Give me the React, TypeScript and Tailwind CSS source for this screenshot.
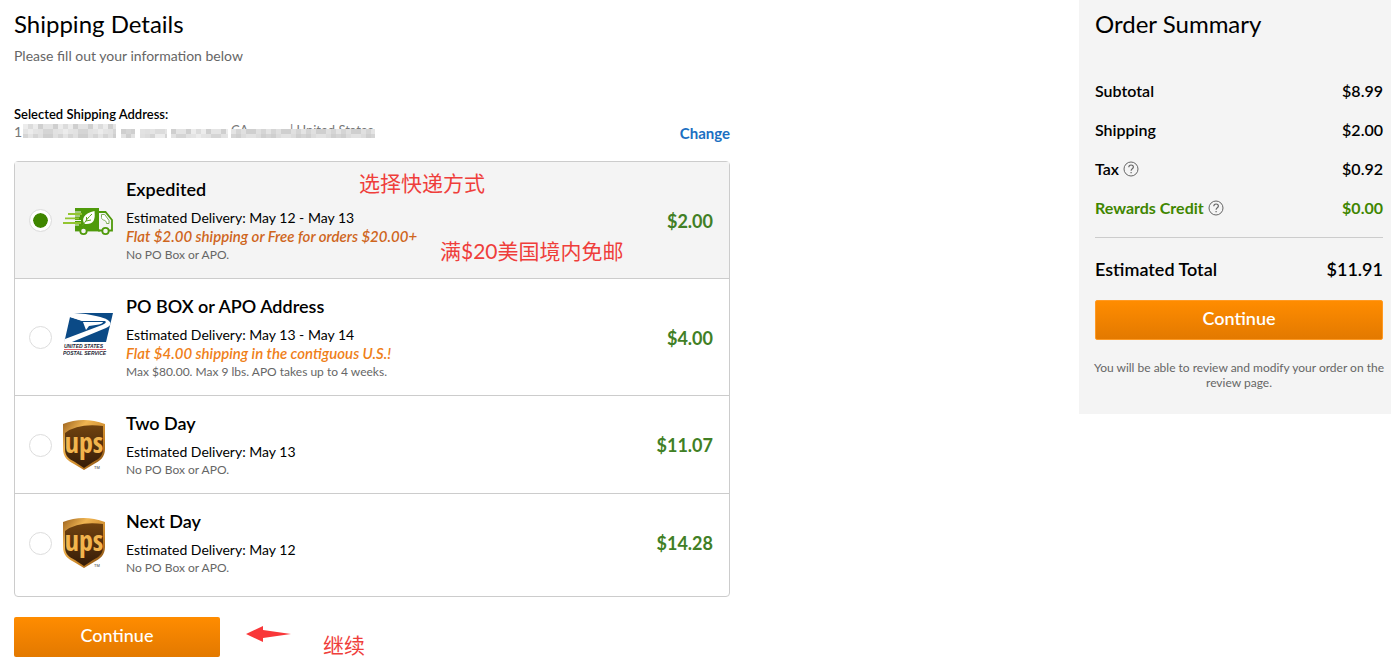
import { useState } from "react";

const methods = [
    { id: "expedited", title: "Expedited", delivery: "Estimated Delivery: May 12 - May 13", promo: "Flat $2.00 shipping or Free for orders $20.00+", note: "No PO Box or APO.", price: "$2.00", logo: "truck" },
    { id: "pobox", title: "PO BOX or APO Address", delivery: "Estimated Delivery: May 13 - May 14", promo: "Flat $4.00 shipping in the contiguous U.S.!", note: "Max $80.00. Max 9 lbs. APO takes up to 4 weeks.", price: "$4.00", logo: "usps" },
    { id: "two-day", title: "Two Day", delivery: "Estimated Delivery: May 13", promo: "", note: "No PO Box or APO.", price: "$11.07", logo: "ups" },
    { id: "next-day", title: "Next Day", delivery: "Estimated Delivery: May 12", promo: "", note: "No PO Box or APO.", price: "$14.28", logo: "ups" },
];

const summary = [
    { label: "Subtotal", value: "$8.99", help: false, green: false },
    { label: "Shipping", value: "$2.00", help: false, green: false },
    { label: "Tax", value: "$0.92", help: true, green: false },
    { label: "Rewards Credit", value: "$0.00", help: true, green: true },
];

// Blocks that hide the private part of the address: start, end
const maskRuns = [[9, 102], [107, 121], [126, 153], [157, 214], [217, 361]];
const maskShades = ["#dcdcdc", "#e4e4e4", "#cfcfcf", "#e0e0e0", "#ececec", "#d5d5d5", "#e2e2e2"];

function AddressMask() {
    const cells = maskRuns.flatMap(([from, to], run) => {
        const out = [];
        for (let x = from; x < to; x += 5) {
            for (let row = 0; row < 3; row++) {
                if (row === 0 && x > 102) continue;
                const shade = maskShades[(x * x + row * 4 + run) % 7];
                out.push(<rect key={`${x}-${row}`} x={x} y={row * 5} width={Math.min(5, to - x)} height={row === 2 ? 4 : 5} fill={shade} />);
            }
        }
        return out;
    });
    return <svg className="absolute left-0 top-0" width="362" height="14" viewBox="0 0 362 14" aria-hidden="true">{cells}</svg>;
}

function TruckLogo() {
    return (
        <svg width="50" height="30" viewBox="0 0 50 30" fill="none" aria-hidden="true">
            <path d="M12 2h24v22H12z" fill="#4f9a0b" />
            <path d="M36 6h6.500l6.500 8v10.500h-3M35 24.500h4" stroke="#4f9a0b" strokeWidth="1.800" />
            <path d="M38.500 8.500h3.200l4.300 6v3h-2.500c0-2-1-3-3-3.500-1.500-.5-2-1.500-2-2.500z" fill="#fff" stroke="#7fae58" />
            <path d="M12 6h6M12 10h5M12 14.500h6M12 19h4" stroke="#f4f4f4" strokeWidth="1.200" />
            <path d="M5 8h14M2 12.300h14M0 17h18" stroke="#93c531" strokeWidth="1.800" />
            <path d="M21.500 18C18 13 21 7 31.500 5c1 9-1 13-8 13z" fill="#fff" />
            <path d="M19.500 20c3-5 6-9 9.500-12M23.500 14.500v-3.500M23 15l5-1" stroke="#61a321" />
            <path d="M12 24.500h25" stroke="#4f9a0b" strokeWidth="1.800" />
            <circle cx="20.500" cy="25" r="3.200" fill="#f4f4f4" stroke="#4f9a0b" strokeWidth="1.800" />
            <circle cx="42.500" cy="25" r="3.200" fill="#f4f4f4" stroke="#4f9a0b" strokeWidth="1.800" />
        </svg>
    );
}

function UspsLogo() {
    return (
        <svg width="50" height="50" viewBox="0 0 50 50" aria-hidden="true">
            <path d="M8 0h42l-7 29H1z" fill="#0b4a86" />
            <path d="M4 0h7c16 1 31 4 35 8 3 3 1 5-3 7L9 29H1z" fill="#fff" />
            <path d="M7 4l12 4h23c2 1 0 3-3 4L2 26z" fill="#0b4a86" />
            <path d="M5 2c14 1 27 3 37 6H20L7 4z" fill="#fff" />
            <path d="M20 9h20c0 1-2 2-4 2.500l-10 1.500-3 4z" fill="#fff" />
            <text x="1" y="35" fontFamily="Liberation Sans" fontSize="5" fontWeight="700" fontStyle="italic" fill="#1d2433">UNITED STATES</text>
            <path d="M1 36.500h42" stroke="#dc3b46" strokeWidth="0.800" />
            <text x="0" y="42" fontFamily="Liberation Sans" fontSize="5" fontWeight="700" fontStyle="italic" fill="#1d2433">POSTAL SERVICE</text>
        </svg>
    );
}

function UpsLogo() {
    return (
        <svg width="50" height="52" viewBox="0 0 50 52" aria-hidden="true">
            <defs>
                <linearGradient id="upsGold" x1="0" y1="0" x2="1" y2="1">
                    <stop offset="0" stopColor="#9a601c" />
                    <stop offset="0.300" stopColor="#f0b552" />
                    <stop offset="0.650" stopColor="#c98527" />
                    <stop offset="1" stopColor="#75420f" />
                </linearGradient>
                <linearGradient id="upsBrown" x1="0" y1="0" x2="0" y2="1">
                    <stop offset="0" stopColor="#70420f" />
                    <stop offset="1" stopColor="#351c08" />
                </linearGradient>
            </defs>
            <path d="M0 5Q20-3 42 5v25c0 8-5 12-11 15l-10 6-10-6C5 42 0 38 0 30z" fill="url(#upsGold)" />
            <path d="M2 14Q15 4 40 7v23c0 7-4 10-10 13l-9 6-9-6C6 40 2 37 2 30z" fill="url(#upsBrown)" />
            <text x="21" y="34" textAnchor="middle" fontFamily="'Liberation Sans Narrow', 'Open Sans Condensed', 'DejaVu Sans Condensed', sans-serif" fontSize="28" fontWeight="700" fill="#f2b44d">ups</text>
            <text x="31" y="50" fontFamily="Liberation Sans" fontSize="4" fill="#333">TM</text>
        </svg>
    );
}

function HelpIcon() {
    return (
        <svg width="16" height="16" viewBox="0 0 16 16" fill="none" stroke="#666" aria-hidden="true">
            <circle cx="8" cy="8" r="7" />
            <path d="M5.800 6.300c0-3 4.600-3 4.600-.2 0 1.800-2.300 1.700-2.300 3.700M8.100 11v1.300" strokeWidth="1.200" />
        </svg>
    );
}

function MethodLogo({ name }: { name: string }) {
    if (name === "truck") return <TruckLogo />;
    if (name === "usps") return <UspsLogo />;
    return <UpsLogo />;
}

export default function App() {
    const [selected, setSelected] = useState("expedited");

    return (
        <div className="flex items-start justify-between gap-8 bg-white font-['Lato','Noto_Sans_CJK_SC',sans-serif] text-black">
            <main className="w-full max-w-[730px] pl-3.5">
                <h1 className="pt-2 text-2xl leading-8">Shipping Details</h1>
                <p className="mt-1.5 text-sm leading-5 text-[#666]">Please fill out your information below</p>

                {/* Address */}
                <div className="mt-[38px] flex items-end justify-between">
                    <div>
                        <h2 className="text-[13px] leading-5 font-semibold">Selected Shipping Address:</h2>
                        <div className="relative h-5 text-sm leading-4 text-[#777]">
                            1
                            <span className="absolute top-0 left-[217px] text-[13px] leading-3">CA</span>
                            <span className="absolute top-0 left-[276px] text-[13px] leading-3 whitespace-nowrap">| United States</span>
                            <AddressMask />
                        </div>
                    </div>
                    <a href="#" className="text-[15px] leading-[22px] font-bold text-[#1b6fc2]">Change</a>
                </div>

                {/* Shipping methods */}
                <form className="relative mt-[17px] rounded-sm border border-[#ccc]">
                    {methods.map((m) => (
                        <label key={m.id} htmlFor={m.id}
                            className="flex items-center border-b border-[#ccc] pt-[15px] pr-4 pb-3.5 pl-3.5 last-of-type:border-b-0 last-of-type:pb-[19px] has-checked:bg-[#f4f4f4]">
                            <input id={m.id} type="radio" name="method" checked={selected === m.id} onChange={() => setSelected(m.id)}
                                className="h-[23px] w-[23px] shrink-0 appearance-none rounded-full border border-[#ddd] bg-white bg-clip-content p-[3px] checked:bg-[#3f8600] checked:shadow-[inset_0_0_0_3px_#fff]" />
                            <span className="ml-[11px] w-[50px] shrink-0"><MethodLogo name={m.logo} /></span>
                            <span className="ml-[13px] flex grow flex-col">
                                <span className="mb-[7px] text-lg leading-6 font-semibold">{m.title}</span>
                                <span className="text-sm leading-[19px]">{m.delivery}</span>
                                {m.promo && (
                                    <span className={m.id === "expedited" ? "text-[15px] leading-[19px] font-semibold text-[#cf661d] italic" : "text-[15px] leading-[19px] font-semibold text-[#ef8019] italic"}>{m.promo}</span>
                                )}
                                <span className="text-xs leading-[18px] text-[#666]">{m.note}</span>
                            </span>
                            <span className="text-lg leading-6 font-bold text-[#417f25]">{m.price}</span>
                        </label>
                    ))}
                    <span className="absolute top-[7px] left-[344px] text-[21px] leading-7 text-[#ef3e3b]">选择快递方式</span>
                    <span className="absolute top-[75px] left-[425px] text-[21px] leading-7 text-[#ef3e3b]">满$20美国境内免邮</span>
                </form>

                <div className="mt-5 flex items-start">
                    <button type="button" className="h-10 w-[206px] rounded-xs bg-linear-to-b from-[#ff8c00] to-[#e37900] pb-1 text-lg font-medium text-white">Continue</button>
                    <svg className="mt-2 ml-[26px]" width="46" height="18" viewBox="0 0 46 18" aria-hidden="true">
                        <path d="M0 9L17 1v4l28 4-28 4v4z" fill="#f93739" />
                    </svg>
                    <span className="mt-3.5 ml-[31px] text-[21px] leading-7 text-[#ef3e3b]">继续</span>
                </div>
            </main>

            {/* Order summary */}
            <aside className="w-[312px] shrink-0 bg-[#f4f4f4] pt-2 pr-2 pb-6 pl-4">
                <h2 className="text-2xl leading-8">Order Summary</h2>
                <dl className="mt-[39px] flex flex-col gap-[15px] border-b border-[#ccc] pb-[17px]">
                    {summary.map((row) => (
                        <div key={row.label} className={row.green ? "flex justify-between text-base leading-6 font-bold text-[#3f8600]" : "flex justify-between text-base leading-6 font-semibold"}>
                            <dt className="flex items-center gap-1">{row.label}{row.help && <HelpIcon />}</dt>
                            <dd>{row.value}</dd>
                        </div>
                    ))}
                </dl>
                <div className="mt-[19px] flex justify-between text-lg leading-6 font-semibold">
                    <span>Estimated Total</span>
                    <span>$11.91</span>
                </div>
                <button type="button" className="mt-[19px] h-10 w-full rounded-xs border border-[#ff9a24] bg-linear-to-b from-[#ff8c00] to-[#e37900] pb-1 text-lg font-semibold text-white">Continue</button>
                <p className="-mx-1 mt-5 text-center text-xs leading-[15px] text-[#666]">You will be able to review and modify your order on the review page.</p>
            </aside>
        </div>
    );
}
